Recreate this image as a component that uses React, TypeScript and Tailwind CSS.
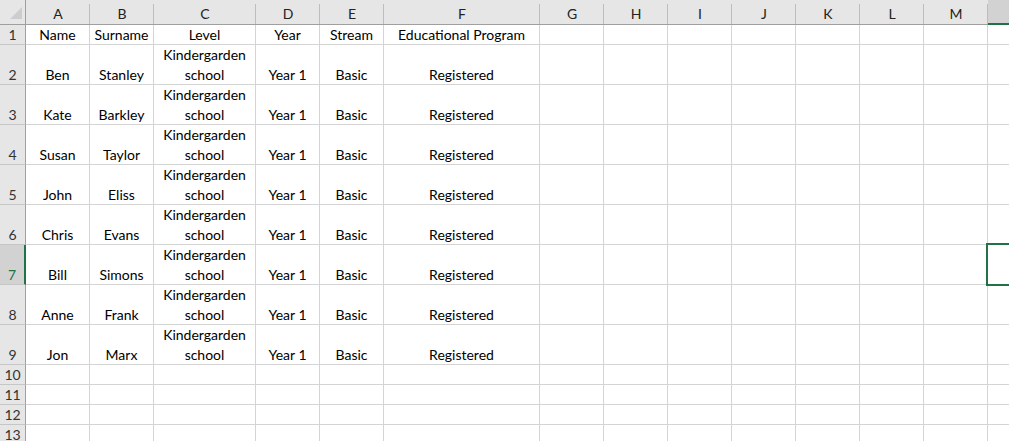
const columns = [
  { label: "A", w: "w-[64px]" },
  { label: "B", w: "w-[64px]" },
  { label: "C", w: "w-[102px]" },
  { label: "D", w: "w-[64px]" },
  { label: "E", w: "w-[64px]" },
  { label: "F", w: "w-[156px]" },
  { label: "G", w: "w-[64px]" },
  { label: "H", w: "w-[64px]" },
  { label: "I", w: "w-[64px]" },
  { label: "J", w: "w-[64px]" },
  { label: "K", w: "w-[64px]" },
  { label: "L", w: "w-[64px]" },
  { label: "M", w: "w-[64px]" },
  { label: "N", w: "w-[64px]" },
];

const people = [
  ["Ben", "Stanley"],
  ["Kate", "Barkley"],
  ["Susan", "Taylor"],
  ["John", "Eliss"],
  ["Chris", "Evans"],
  ["Bill", "Simons"],
  ["Anne", "Frank"],
  ["Jon", "Marx"],
];

type Row = { n: number; h: string; cells: React.ReactNode[] };

const rows: Row[] = [
  {
    n: 1,
    h: "h-[20px]",
    cells: ["Name", "Surname", "Level", "Year", "Stream", "Educational Program"],
  },
  ...people.map(([first, last], i) => ({
    n: i + 2,
    h: "h-[40px]",
    cells: [
      first,
      last,
      <>
        Kindergarden
        <br />
        school
      </>,
      "Year 1",
      "Basic",
      "Registered",
    ],
  })),
  ...[10, 11, 12, 13].map((n) => ({ n, h: "h-[20px]", cells: [] })),
];

function ColumnHeader({ label, w }: { label: string; w: string }) {
  const active = label === "N";
  return (
    <div
      className={`relative flex shrink-0 items-center justify-center pt-[3px] ${w} ${
        active
          ? "border-b-2 border-[#217346] bg-[#d2d2d2]"
          : "border-b border-[#9f9f9f] bg-[#e6e6e6]"
      }`}
    >
      <span className="text-[14px] leading-[20px] text-[#222]">{active ? "" : label}</span>
      <span className="absolute right-0 top-[4px] bottom-0 w-px bg-[#bdbdbd]" />
    </div>
  );
}

export default function App() {
  return (
    <div
      className="relative h-[441px] w-[1009px] overflow-hidden bg-white text-black"
      style={{ fontFamily: "Lato, 'Open Sans', sans-serif" }}
    >
      <div className="flex h-[25px]">
        <div className="relative w-[26px] shrink-0 border-b border-r border-[#9f9f9f] bg-[#e6e6e6]">
          <svg className="absolute left-0 top-0" width="25" height="24" viewBox="0 0 25 24">
            <polygon points="10,19 22,19 22,7" fill="#cdcdcd" />
          </svg>
        </div>
        {columns.map((c) => (
          <ColumnHeader key={c.label} label={c.label} w={c.w} />
        ))}
      </div>

      {rows.map((row) => {
        const selected = row.n === 7;
        return (
          <div key={row.n} className={`flex ${row.h}`}>
            <div
              className={`flex w-[26px] shrink-0 items-end justify-center border-b border-[#c6c6c6] text-[14px] leading-[20px] ${
                selected
                  ? "border-r-2 border-r-[#217346] bg-[#d2d2d2] text-[#217346]"
                  : "border-r border-r-[#9f9f9f] bg-[#e6e6e6] text-[#333]"
              }`}
            >
              <span className="translate-y-px">{row.n}</span>
            </div>
            {columns.map((c, i) => (
              <div
                key={c.label}
                className={`flex shrink-0 items-end justify-center border-b border-r border-[#d4d4d4] text-center text-[14px] leading-[20px] ${c.w}`}
              >
                <span className="translate-y-px">{row.cells[i] ?? ""}</span>
              </div>
            ))}
          </div>
        );
      })}

      <div className="absolute left-[986px] top-[243px] h-[43px] w-[40px] border-2 border-[#217346]" />
    </div>
  );
}
